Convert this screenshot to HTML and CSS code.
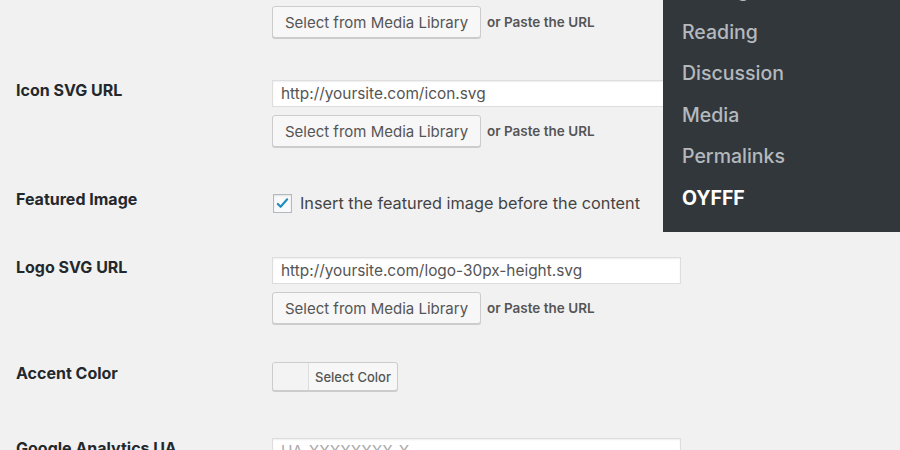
FILE: index.html
```html
<!DOCTYPE html>
<html>
<head>
<link rel="stylesheet" href="styles.css">
</head>
<body>
<div class="wrap">
  <div class="row first">
    <div class="label"></div>
    <div class="field">
      <div class="media-line">
        <button class="button">Select from Media Library</button>
        <span class="hint">or Paste the URL</span>
      </div>
    </div>
  </div>

  <div class="row">
    <div class="label">Icon SVG URL</div>
    <div class="field">
      <input class="text" type="text" value="http://yoursite.com/icon.svg">
      <div class="media-line">
        <button class="button">Select from Media Library</button>
        <span class="hint">or Paste the URL</span>
      </div>
    </div>
  </div>

  <div class="row check-row">
    <div class="label">Featured Image</div>
    <div class="field">
      <label class="check">
        <span class="box">
          <svg viewBox="0 0 16 16" width="15" height="15"><path d="M3 8.5l3 3 7-8" fill="none" stroke="#1e8cbe" stroke-width="2.2" stroke-linecap="round" stroke-linejoin="round"/></svg>
        </span>
        Insert the featured image before the content
      </label>
    </div>
  </div>

  <div class="row">
    <div class="label">Logo SVG URL</div>
    <div class="field">
      <input class="text" type="text" value="http://yoursite.com/logo-30px-height.svg">
      <div class="media-line">
        <button class="button">Select from Media Library</button>
        <span class="hint">or Paste the URL</span>
      </div>
    </div>
  </div>

  <div class="row color-row">
    <div class="label">Accent Color</div>
    <div class="field">
      <div class="color-picker">
        <span class="swatch"></span>
        <span class="color-text">Select Color</span>
      </div>
    </div>
  </div>

  <div class="row">
    <div class="label">Google Analytics UA</div>
    <div class="field">
      <input class="text faint" type="text" value="UA-XXXXXXXX-X">
    </div>
  </div>
</div>

<ul class="submenu">
  <li>Writing</li>
  <li>Reading</li>
  <li>Discussion</li>
  <li>Media</li>
  <li>Permalinks</li>
  <li class="current">OYFFF</li>
</ul>
</body>
</html>
```

FILE: styles.css
```css
* {
  box-sizing: border-box;
}

body {
  margin: 0;
  background-color: #f1f1f1;
  font-family: Inter, "Liberation Sans", Arial, sans-serif;
  color: #23282d;
  overflow: hidden;
  height: 450px;
}

.wrap {
  padding-top: 6px;
}

.row {
  display: grid;
  grid-template-columns: 272px 1fr;
  padding: 21px 0;
}

.row.first {
  padding-top: 0;
}

.row.color-row {
  padding: 17px 0 26px;
}

.color-row .label {
  padding-top: 1px;
}

.label {
  padding-left: 16px;
  font-size: 16px;
  font-weight: 700;
  line-height: 20px;
}

.field {
  display: flex;
  flex-direction: column;
  gap: 8px;
}

.text {
  width: 409px;
  height: 27px;
  border: 1px solid #ddd;
  background: #fff;
  box-shadow: inset 0 1px 2px rgba(0, 0, 0, 0.07);
  font-family: inherit;
  font-size: 15.4px;
  color: #555;
  padding: 0 8px;
  margin: 0;
}

.text.faint {
  color: #aaa;
}

.media-line {
  display: flex;
  align-items: center;
  gap: 6px;
}

.button {
  height: 32px;
  width: 209px;
  padding: 0;
  border: 1px solid #ccc;
  border-radius: 3px;
  background: #f7f7f7;
  box-shadow: 0 1px 0 #ccc;
  color: #555;
  font-family: inherit;
  font-size: 15px;
  margin: 0;
}

.hint {
  font-size: 13.5px;
  font-weight: 600;
  color: #555;
}

.check-row .field {
  min-height: 24px;
}

.check {
  display: flex;
  align-items: center;
  gap: 8px;
  font-size: 16.3px;
  color: #444;
  line-height: 24px;
  margin-top: 2px;
}

.box {
  width: 19px;
  height: 19px;
  border: 1px solid #b4b9be;
  background: #fafafa;
  box-shadow: inset 0 1px 2px rgba(0, 0, 0, 0.1);
  display: flex;
  align-items: center;
  justify-content: center;
  margin-left: 1px;
}

.color-picker {
  display: flex;
  width: 126px;
  height: 29px;
  border: 1px solid #ccc;
  border-radius: 3px;
  background: #f7f7f7;
  box-shadow: 0 1px 0 #ccc;
  overflow: hidden;
}

.swatch {
  width: 36px;
  background: #f3f3f3;
  border-right: 1px solid #ddd;
}

.color-text {
  flex: 1;
  font-size: 13px;
  font-weight: 500;
  color: #555;
  display: flex;
  align-items: center;
  justify-content: center;
}

.submenu {
  position: absolute;
  top: 0;
  left: 663px;
  width: 237px;
  height: 232px;
  margin: 0;
  padding: 0 0 0 19px;
  list-style: none;
  background-color: #32373c;
  overflow: hidden;
}

.submenu li {
  font-size: 19.5px;
  font-weight: 500;
  line-height: 41.6px;
  color: #b4b9be;
  position: relative;
  top: -30px;
}

.submenu li.current {
  color: #fff;
  font-weight: 700;
}
```
